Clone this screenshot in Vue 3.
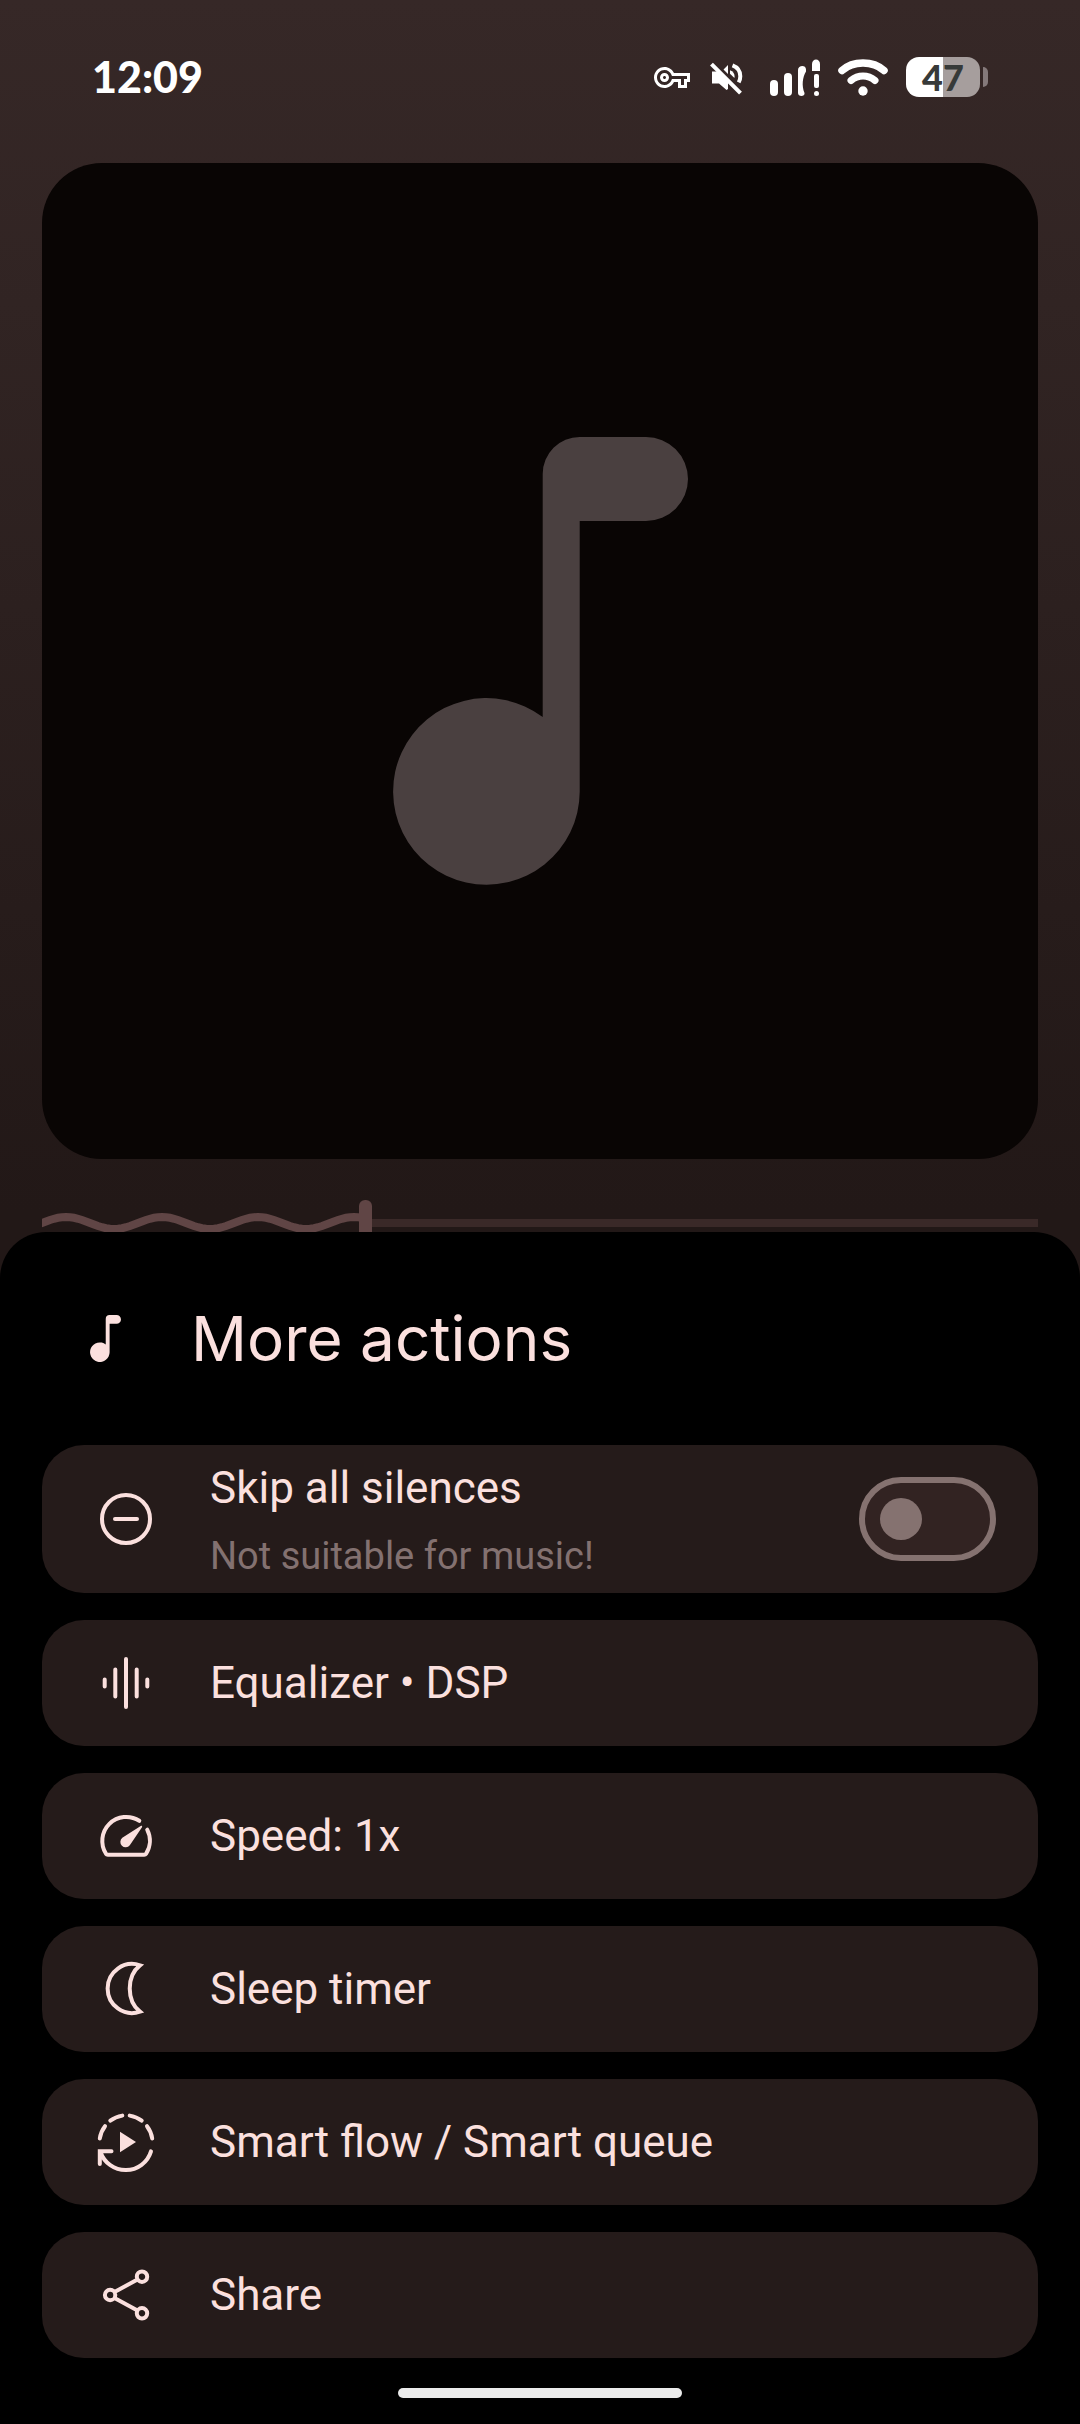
<template>
  <div class="screen">
    <header class="status-bar">
      <span class="clock">12:09</span>
      <div class="status-icons">
        <svg class="key" viewBox="0 5 24 14" aria-hidden="true">
          <path d="M22 19h-6v-4h-2.68c-1.14 2.42-3.6 4-6.32 4-3.86 0-7-3.14-7-7s3.14-7 7-7c2.72 0 5.17 1.58 6.32 4H24v6h-2v4zm-4-2h2v-4h2v-2H11.94l-.23-.67C11.01 8.34 9.11 7 7 7c-2.76 0-5 2.24-5 5s2.24 5 5 5c2.11 0 4.01-1.34 4.71-3.33l.23-.67H18v4zM7 15c-1.65 0-3-1.35-3-3s1.35-3 3-3 3 1.35 3 3-1.35 3-3 3zm0-4c-.55 0-1 .45-1 1s.45 1 1 1 1-.45 1-1-.45-1-1-1z" />
        </svg>
        <svg class="muted" viewBox="0 -2 36 36" aria-hidden="true">
          <path d="M4 10.500h7l9 9V28l-1.500 1L11 22.500H4zM20 4v9l-4.500-4.500z" />
          <path class="line" d="M24.500 4.300C29 6 32.300 10 32.300 15.200c0 2.300-.6 4.400-1.600 6.200" />
          <path d="M22 9.200c3 1.100 4.600 3.500 4.600 6.300l-.2 1.600L22 12.700z" />
          <path class="line" d="M3.500 3.200l29 29" />
        </svg>
        <svg class="signal" viewBox="0 0 50 37" aria-hidden="true">
          <rect x="0" y="21" width="8" height="16" rx="4" />
          <rect x="14" y="14" width="8" height="23" rx="4" />
          <path d="M28 11c0-5 8-5.500 8-.5v2c-3.500 6-4.500 14-1.500 21.500.5 2-1.500 3-3 3-2 0-3.500-1-3.500-3z" />
          <path d="M42 12V5c0-6 8-6 8 0v7z" />
          <rect x="44" y="15" width="5" height="14" rx="2" />
          <circle cx="46.500" cy="34.500" r="2.500" />
        </svg>
        <svg class="wifi" viewBox="0 0 50 37" aria-hidden="true">
          <path d="M4 11.500C15 1.500 35 1.500 46 11.500" stroke-width="7.500" />
          <path d="M13 21.500c7-6 17-6 24 0" stroke-width="7" />
          <circle cx="25" cy="32" r="4.700" />
        </svg>
        <div class="battery">
          <span class="battery-body">47</span>
          <span class="battery-tip"></span>
        </div>
      </div>
    </header>

    <main class="player">
      <div class="cover">
        <svg class="cover-note" viewBox="0 0 295 448" aria-hidden="true">
          <path :d="notePath" />
        </svg>
      </div>
      <div class="seek">
        <div class="played" :style="{ width: position / 10 + '%' }">
          <svg width="1200" height="46" viewBox="0 0 1200 46" aria-hidden="true">
            <path :d="wavePath" />
          </svg>
        </div>
        <div class="remaining"></div>
        <input v-model="position" type="range" min="0" max="1000" aria-label="Position">
      </div>
    </main>

    <section class="sheet">
      <div class="sheet-header">
        <svg class="sheet-note" viewBox="0 0 295 448" aria-hidden="true">
          <path :d="notePath" />
        </svg>
        <h1>More actions</h1>
      </div>

      <div class="actions">
        <label class="action tall" for="skip">
          <svg class="icon" viewBox="0 0 64 64" aria-hidden="true">
            <circle cx="32" cy="32" r="24" />
            <path d="M21 32h22" />
          </svg>
          <span class="labels">
            <span class="title">Skip all silences</span>
            <span class="subtitle">Not suitable for music!</span>
          </span>
          <input id="skip" v-model="skipSilences" class="switch" type="checkbox" role="switch">
        </label>

        <button v-for="action in actions" :key="action.title" class="action" type="button">
          <svg class="icon" viewBox="0 0 64 64" aria-hidden="true">
            <path :d="action.line" />
            <path v-if="action.solid" class="solid" :d="action.solid" />
          </svg>
          <span class="title">{{ action.title }}</span>
        </button>
      </div>

      <div class="home-bar"></div>
    </section>
  </div>
</template>

<script setup>
import { ref } from 'vue'

const skipSilences = ref(false)
const position = ref(322)

const notePath = 'M149.700 280V37A37 37 0 0 1 186.700 0H253A42 42 0 0 1 253 84H186.700V355A93.300 93.300 0 1 1 149.700 280Z'

// one wave is 96px long and 12px high
function buildWave(width) {
  const points = []
  for (let x = -4; x <= width; x += 4) {
    const y = 23 - 6 * Math.sin((x / 96) * Math.PI * 2)
    points.push(`${x} ${y.toFixed(2)}`)
  }
  return 'M' + points.join('L')
}
const wavePath = buildWave(1200)

const actions = [
  {
    title: 'Equalizer • DSP',
    line: 'M10.700 28.500v7M21.300 18.500v27M32 8v48M42.700 18.500v27M53.300 28.500v7',
  },
  {
    title: 'Speed: 1x',
    line: 'M45.300 16.800A24 24 0 0 0 12 49.800Q12.600 50.700 13.800 50.700H50.200Q51.400 50.700 52 49.800A24 24 0 0 0 53.200 25.700',
    solid: 'M48 23.200C48.600 22.200 47.600 21.400 46.700 22L28.300 33.800A5.300 5.300 0 1 0 35.800 41.200Z',
  },
  {
    title: 'Sleep timer',
    line: 'M46 8.300A24.500 24.500 0 1 0 46 54.700C32.300 44 32.300 19 46 8.300Z',
  },
  {
    title: 'Smart flow / Smart queue',
    line: 'M16.300 10.600Q21.500 6.700 28.300 5.600M35.700 5.600Q42.500 6.700 47.700 10.600M11 16.200Q6.800 21.600 5.800 28.500M53 16.200Q57.200 21.600 58.200 28.500M57 41.300A26.500 26.500 0 0 1 6.500 42M5.800 54V41.300H17.500',
    solid: 'M26 21.700V42.300L42 32Z',
  },
  {
    title: 'Share',
    line: 'M21.300 32a5.200 5.200 0 1 1-10.400 0a5.200 5.200 0 1 1 10.400 0M53.200 13.700a5.200 5.200 0 1 1-10.400 0a5.200 5.200 0 1 1 10.400 0M53.200 50.300a5.200 5.200 0 1 1-10.400 0a5.200 5.200 0 1 1 10.400 0M20.500 29L43.500 16.500M20.500 35L43.500 47.500',
  },
]
</script>

<style>
body {
  margin: 0;
  background: #000;
}
</style>

<style scoped>
* {
  box-sizing: border-box;
}
.screen {
  min-height: 100vh;
  display: flex;
  flex-direction: column;
  background: linear-gradient(#362827, #221817 50%);
  font-family: Roboto, sans-serif;
  color: #fbe0de;
}

.status-bar {
  height: 154px;
  padding: 0 92px;
  display: flex;
  justify-content: space-between;
  align-items: center;
  color: #fff;
}
.clock {
  font-family: Lato, sans-serif;
  font-weight: 900;
  font-size: 43px;
  line-height: 48px;
}
.status-icons {
  display: flex;
  align-items: center;
  gap: 18px;
  fill: #fff;
}
.key {
  width: 36px;
  height: 21px;
}
.muted {
  width: 36px;
  height: 36px;
}
.muted .line {
  fill: none;
  stroke: #fff;
  stroke-width: 4;
}
.signal {
  width: 50px;
  height: 37px;
  margin-left: 8px;
}
.wifi {
  width: 50px;
  height: 37px;
}
.wifi path {
  fill: none;
  stroke: #fff;
  stroke-linecap: round;
}
.battery {
  display: flex;
  align-items: center;
  gap: 3px;
}
.battery-body {
  width: 74px;
  height: 40px;
  border-radius: 13px;
  background: linear-gradient(90deg, #fff 50%, #a69e9d 50%);
  color: #373a39;
  font-family: Lato, sans-serif;
  font-weight: 900;
  font-size: 36px;
  line-height: 40px;
  text-align: center;
}
.battery-tip {
  width: 5px;
  height: 20px;
  border-radius: 0 5px 5px 0;
  background: #84797a;
}

.player {
  padding: 9px 42px 0;
}
.cover {
  aspect-ratio: 1;
  border-radius: 60px;
  background: #090504;
  display: flex;
  justify-content: center;
  align-items: center;
}
.cover-note {
  width: 295px;
  fill: #4a4040;
}
.seek {
  position: relative;
  height: 46px;
  margin-top: 41px;
  display: flex;
  align-items: center;
}
.played {
  height: 46px;
  overflow: hidden;
}
.played path {
  fill: none;
  stroke: #604545;
  stroke-width: 8;
}
.remaining {
  flex: 1;
  height: 8px;
  background: #3a2928;
}
.seek input {
  position: absolute;
  inset: 0;
  width: 100%;
  height: 46px;
  margin: 0;
  appearance: none;
  background: none;
}
.seek input::-webkit-slider-thumb {
  appearance: none;
  width: 13px;
  height: 46px;
  border-radius: 6px;
  background: #604545;
}

.sheet {
  position: relative;
  flex: 1;
  margin-top: -14px;
  padding: 0 42px 26px;
  border-radius: 46px 46px 0 0;
  background: #000;
}
.sheet-header {
  height: 213px;
  padding-left: 48px;
  display: flex;
  align-items: center;
  gap: 70px;
}
.sheet-note {
  width: 31px;
  height: 47px;
  fill: #fbe0de;
}
h1 {
  margin: 0;
  font-family: Inter, sans-serif;
  font-weight: 400;
  font-size: 62px;
  line-height: 72px;
}

.actions {
  display: flex;
  flex-direction: column;
  gap: 27px;
}
.action {
  width: 100%;
  height: 126px;
  padding: 0 42px 0 52px;
  border: 0;
  border-radius: 42px;
  background: #251b1a;
  color: inherit;
  font-family: inherit;
  display: flex;
  align-items: center;
  gap: 52px;
  text-align: left;
}
.action.tall {
  height: 148px;
}
.icon {
  flex: none;
  width: 64px;
  height: 64px;
  fill: none;
  stroke: #fbe0de;
  stroke-width: 4;
  stroke-linecap: round;
}
.icon .solid {
  fill: #fbe0de;
  stroke: none;
}
.labels {
  flex: 1;
  padding-top: 4px;
  display: flex;
  flex-direction: column;
  gap: 10px;
}
.title {
  font-size: 44px;
  line-height: 60px;
}
.subtitle {
  color: #837170;
  font-size: 38px;
  line-height: 56px;
}
.switch {
  appearance: none;
  flex: none;
  width: 137px;
  height: 84px;
  margin: 0;
  padding: 0 15px;
  border: 6px solid #857270;
  border-radius: 42px;
  background: #322322;
  display: flex;
  align-items: center;
}
.switch::before {
  content: '';
  width: 42px;
  height: 42px;
  border-radius: 50%;
  background: #857270;
}
.switch:checked {
  justify-content: flex-end;
}

.home-bar {
  width: 284px;
  height: 10px;
  margin: 30px auto 0;
  border-radius: 5px;
  background: #ebebeb;
}
</style>
